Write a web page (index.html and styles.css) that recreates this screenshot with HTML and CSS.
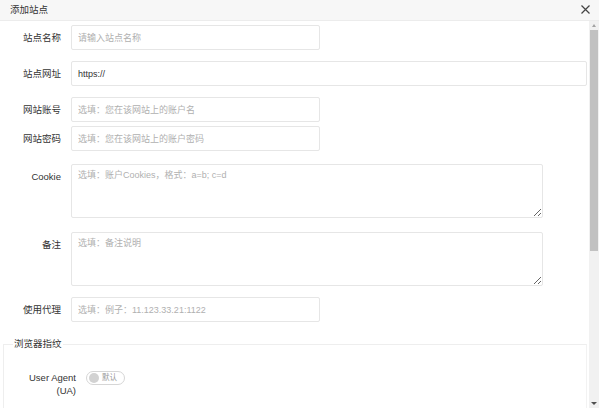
FILE: index.html
```html
<!DOCTYPE html>
<html lang="zh-CN">
<head>
<meta charset="utf-8">
<title>添加站点</title>
<link rel="stylesheet" href="styles.css">
</head>
<body>
<div class="dialog">
  <div class="header">
    <span class="title">添加站点</span>
    <svg class="close" width="9" height="9" viewBox="0 0 9 9"><path d="M0.5 0.5L8.5 8.5M8.5 0.5L0.5 8.5" stroke="#444" stroke-width="1.2" fill="none"/></svg>
  </div>
  <div class="body">
    <form class="content">
      <div class="row">
        <label class="label">站点名称</label>
        <input class="input short" type="text" placeholder="请输入站点名称">
      </div>
      <div class="row">
        <label class="label">站点网址</label>
        <input class="input long" type="text" value="https://">
      </div>
      <div class="row">
        <label class="label">网站账号</label>
        <input class="input short" type="text" placeholder="选填：您在该网站上的账户名">
      </div>
      <div class="row row-tight">
        <label class="label">网站密码</label>
        <input class="input short" type="text" placeholder="选填：您在该网站上的账户密码">
      </div>
      <div class="row row-wide">
        <label class="label">Cookie</label>
        <textarea class="textarea" placeholder="选填：账户Cookies，格式：a=b; c=d"></textarea>
      </div>
      <div class="row row-wide">
        <label class="label">备注</label>
        <textarea class="textarea" placeholder="选填：备注说明"></textarea>
      </div>
      <div class="row">
        <label class="label">使用代理</label>
        <input class="input short" type="text" placeholder="选填：例子：11.123.33.21:1122">
      </div>
      <fieldset class="fieldset">
        <legend class="legend">浏览器指纹</legend>
        <div class="fs-body">
          <div class="ua-row">
            <label class="label ua-label">User Agent<br>(UA)</label>
            <span class="switch"><span class="knob"></span><span class="switch-text">默认</span></span>
          </div>
        </div>
      </fieldset>
    </form>
    <div class="scrollbar">
      <div class="arrow arrow-up"></div>
      <div class="track"><div class="thumb"></div></div>
      <div class="arrow arrow-down"></div>
    </div>
  </div>
</div>
</body>
</html>
```

FILE: styles.css
```css
* { box-sizing: border-box; }
html, body { margin: 0; padding: 0; height: 100%; background: #fff; }
body {
  font-family: "Liberation Sans", "Noto Sans CJK SC", sans-serif;
  font-size: 9.5px;
  color: #333;
}
.dialog {
  height: 100vh;
  display: flex;
  flex-direction: column;
  overflow: hidden;
}
.header {
  height: 21px;
  flex: none;
  background: #f7f7f7;
  border-bottom: 1px solid #ececec;
  display: flex;
  align-items: center;
  justify-content: space-between;
  padding: 0 9px 0 10px;
}
.title { font-size: 9.5px; color: #333; line-height: 20px; }
.close { display: block; margin-top: -1px; }
.body {
  flex: 1;
  display: flex;
  min-height: 0;
}
.content {
  flex: 1;
  min-width: 0;
  padding: 4px 2px 0 3px;
  overflow: hidden;
}
.row {
  display: flex;
  align-items: flex-start;
  margin-top: 11px;
}
.row:first-child { margin-top: 0; }
.row-tight { margin-top: 4px; }
.row-wide { margin-top: 13px; }
.row-wide + .row-wide { margin-top: 14px; }
.label {
  width: 58px;
  flex: none;
  margin-right: 10px;
  text-align: right;
  line-height: 25px;
  font-size: 9.5px;
  color: #333;
  white-space: nowrap;
}
.input {
  height: 25px;
  border: 1px solid #e6e6e6;
  border-radius: 2px;
  padding: 0 6px;
  font-family: "Liberation Sans", "Noto Sans CJK SC", sans-serif;
  font-size: 9px;
  color: #333;
  outline: none;
  background: #fff;
}
.input::placeholder, .textarea::placeholder { color: #b0b0b0; }
.short { width: 249px; }
.long { flex: 1; min-width: 0; }
.textarea {
  width: 472px;
  height: 54px;
  border: 1px solid #e6e6e6;
  border-radius: 2px;
  padding: 3px 6px;
  font-family: "Liberation Sans", "Noto Sans CJK SC", sans-serif;
  font-size: 9px;
  color: #333;
  outline: none;
  resize: both;
}
.fieldset {
  margin: 16px 0 0 0;
  padding: 0;
  border: 1px solid #eeeeee;
  border-right-color: #f2f2f2;
  min-width: 0;
}
.legend {
  margin-left: 9px;
  padding: 0 1px;
  font-size: 9.5px;
  line-height: 12px;
  color: #333;
}
.fs-body { padding: 21px 11px 0 14px; }
.ua-row {
  display: flex;
  align-items: flex-start;
  margin-bottom: 40px;
}
.ua-label {
  line-height: 12.5px;
  padding-top: 1px;
}
.switch {
  width: 39px;
  height: 14px;
  border: 1px solid #d6d6d6;
  border-radius: 8px;
  display: flex;
  align-items: center;
  padding-left: 2px;
  background: #fff;
}
.knob {
  width: 10px;
  height: 10px;
  border-radius: 50%;
  background: #d2d2d2;
  flex: none;
}
.switch-text {
  margin-left: 3px;
  font-size: 7.5px;
  color: #999;
  line-height: 12px;
}
.scrollbar {
  width: 10px;
  flex: none;
  background: #f1f1f1;
  display: flex;
  flex-direction: column;
}
.arrow {
  height: 9px;
  flex: none;
  display: flex;
  justify-content: center;
  align-items: center;
}
.arrow-up::before {
  content: "";
  border-left: 2.5px solid transparent;
  border-right: 2.5px solid transparent;
  border-bottom: 3px solid #a3a3a3;
}
.arrow-down::before {
  content: "";
  border-left: 3px solid transparent;
  border-right: 3px solid transparent;
  border-top: 3px solid #505050;
}
.track {
  flex: 1;
  padding: 0 1px;
}
.thumb {
  height: 221px;
  background: #c1c1c1;
}
```
